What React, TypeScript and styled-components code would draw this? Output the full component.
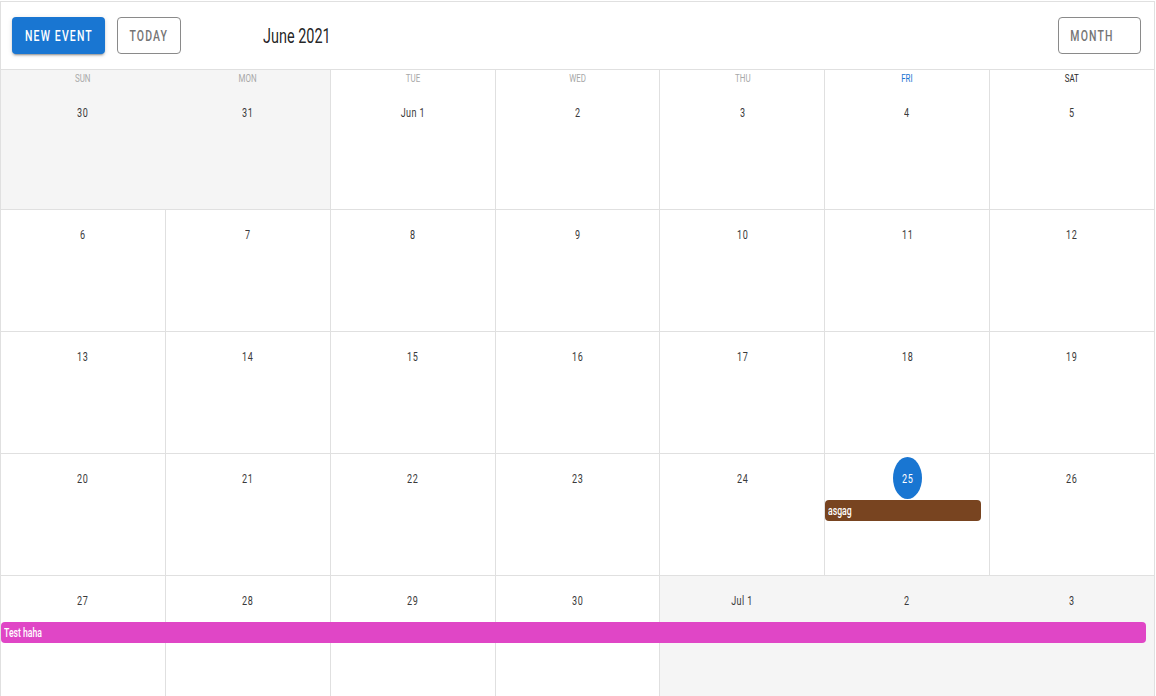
import React from 'react';
import styled, { createGlobalStyle, css } from 'styled-components';

const SX = 0.7225;
const SY = 1.04;

const Global = createGlobalStyle`
  html, body { margin: 0; padding: 0; background: #fff; }
  body { font-family: Roboto, "Noto Sans", Arial, sans-serif; overflow: hidden; }
  * { box-sizing: border-box; }
`;

const Squash = styled.span<{ $origin?: string }>`
  display: inline-block;
  white-space: nowrap;
  transform: scale(${SX}, ${SY});
  transform-origin: ${(p) => p.$origin ?? 'center center'};
`;

const Frame = styled.div`
  width: 1155px;
  margin-top: 1px;
  border-top: 1px solid #e0e0e0;
  border-left: 1px solid #e0e0e0;
`;

const Toolbar = styled.div`
  height: 68px;
  display: flex;
  align-items: center;
  padding: 0 13px 0 11px;
  border-bottom: 1px solid #e0e0e0;
  border-right: 1px solid #e0e0e0;
`;

const Button = styled.button<{ $variant: 'primary' | 'outlined'; $w: number; $padRight?: number }>`
  height: 37px;
  width: ${(p) => p.$w}px;
  flex: none;
  display: flex;
  align-items: center;
  justify-content: center;
  margin: 0;
  padding: 1px ${(p) => p.$padRight ?? 0}px 0 0;
  border-radius: 4px;
  font-family: Roboto, Arial, sans-serif;
  font-size: 14.5px;
  font-weight: 500;
  letter-spacing: 1.6px;
  text-transform: uppercase;
  overflow: visible;
  cursor: pointer;
  ${(p) =>
    p.$variant === 'primary'
      ? css`
          background: #1976d2;
          color: #fff;
          border: none;
          box-shadow: 0 3px 1px -2px rgba(0, 0, 0, 0.2), 0 2px 2px 0 rgba(0, 0, 0, 0.14),
            0 1px 5px 0 rgba(0, 0, 0, 0.12);
        `
      : css`
          background: #fff;
          color: #757575;
          border: 1px solid #8a8a8a;
        `}
`;

const Gap = styled.div<{ $w: number }>`
  width: ${(p) => p.$w}px;
  flex: none;
`;

const Title = styled.div`
  font-size: 20px;
  font-weight: 400;
  color: rgba(0, 0, 0, 0.87);
  line-height: 28px;
  width: 120px;
  flex: none;
`;

const Spacer = styled.div`
  flex: 1;
`;

const HeadRow = styled.div`
  display: grid;
  grid-template-columns: repeat(7, minmax(0, 1fr));
  height: 18px;
`;

const HeadCell = styled.div<{ $outside: boolean; $line: boolean; $color: string }>`
  text-align: center;
  font-size: 11px;
  line-height: 17px;
  color: ${(p) => p.$color};
  background: ${(p) => (p.$outside ? '#f5f5f5' : '#fff')};
  border-right: 1px solid ${(p) => (p.$line ? '#e0e0e0' : 'transparent')};
  text-transform: uppercase;
`;

const Week = styled.div`
  display: grid;
  grid-template-columns: repeat(7, minmax(0, 1fr));
  grid-template-rows: 46px 21px 1fr;
  height: 122px;
  border-bottom: 1px solid #e0e0e0;
`;

const DayCell = styled.div<{ $col: number; $outside: boolean; $line: boolean }>`
  grid-column: ${(p) => p.$col};
  grid-row: 1 / -1;
  display: flex;
  flex-direction: column;
  align-items: center;
  background: ${(p) => (p.$outside ? '#f5f5f5' : '#fff')};
  border-right: 1px solid ${(p) => (p.$line ? '#e0e0e0' : 'transparent')};
`;

const DayLabel = styled.div<{ $today: boolean }>`
  margin-top: 3px;
  width: 29px;
  height: 42px;
  display: flex;
  align-items: center;
  justify-content: center;
  font-size: 12.5px;
  font-weight: 400;
  letter-spacing: 0.6px;
  border-radius: 50%;
  color: ${(p) => (p.$today ? '#fff' : '#3a3a3a')};
  background: ${(p) => (p.$today ? '#1976d2' : 'transparent')};
`;

const EventBar = styled.div<{ $col: number; $span: number; $color: string }>`
  grid-column: ${(p) => `${p.$col} / span ${p.$span}`};
  grid-row: 2;
  z-index: 1;
  margin-right: 9px;
  min-width: 0;
  display: flex;
  align-items: center;
  padding-left: 3px;
  border-radius: 4px;
  background: ${(p) => p.$color};
  color: #fff;
  font-size: 12px;
  font-weight: 500;
  overflow: hidden;
`;

type Day = { label: string; outside?: boolean; today?: boolean };
type Ev = { name: string; col: number; span: number; color: string };

const weekdays = [
  { name: 'Sun', color: '#a8a8a8' },
  { name: 'Mon', color: '#a8a8a8' },
  { name: 'Tue', color: '#a8a8a8' },
  { name: 'Wed', color: '#a8a8a8' },
  { name: 'Thu', color: '#a8a8a8' },
  { name: 'Fri', color: '#1976d2' },
  { name: 'Sat', color: '#2a2a2a' },
];

const range = (a: number, b: number): Day[] =>
  Array.from({ length: b - a + 1 }, (_, i) => ({ label: String(a + i) }));

const weeks: { days: Day[]; events: Ev[] }[] = [
  {
    days: [
      { label: '30', outside: true },
      { label: '31', outside: true },
      { label: 'Jun 1' },
      ...range(2, 5),
    ],
    events: [],
  },
  { days: range(6, 12), events: [] },
  { days: range(13, 19), events: [] },
  {
    days: range(20, 26).map((d) => (d.label === '25' ? { ...d, today: true } : d)),
    events: [{ name: 'asgag', col: 6, span: 1, color: '#784420' }],
  },
  {
    days: [
      ...range(27, 30),
      { label: 'Jul 1', outside: true },
      { label: '2', outside: true },
      { label: '3', outside: true },
    ],
    events: [{ name: 'Test haha', col: 1, span: 7, color: '#e046c6' }],
  },
];

const lineAfter = (days: Day[], i: number) => {
  if (i === days.length - 1) return true;
  return !(days[i].outside && days[i + 1].outside);
};

export default function App() {
  const first = weeks[0].days;
  return (
    <>
      <Global />
      <Frame>
        <Toolbar>
          <Button $variant="primary" $w={93}>
            <Squash>New Event</Squash>
          </Button>
          <Gap $w={12} />
          <Button $variant="outlined" $w={64}>
            <Squash>Today</Squash>
          </Button>
          <Gap $w={82} />
          <Title>
            <Squash $origin="left center">June 2021</Squash>
          </Title>
          <Spacer />
          <Button $variant="outlined" $w={83} $padRight={15}>
            <Squash>Month</Squash>
          </Button>
        </Toolbar>
        <HeadRow>
          {weekdays.map((w, i) => (
            <HeadCell key={w.name} $outside={!!first[i].outside} $line={lineAfter(first, i)} $color={w.color}>
              <Squash>{w.name}</Squash>
            </HeadCell>
          ))}
        </HeadRow>
        {weeks.map((wk, wi) => (
          <Week key={wi}>
            {wk.days.map((d, i) => (
              <DayCell key={i} $col={i + 1} $outside={!!d.outside} $line={lineAfter(wk.days, i)}>
                <DayLabel $today={!!d.today}>
                  <Squash>{d.label}</Squash>
                </DayLabel>
              </DayCell>
            ))}
            {wk.events.map((e) => (
              <EventBar key={e.name} $col={e.col} $span={e.span} $color={e.color}>
                <Squash $origin="left center">{e.name}</Squash>
              </EventBar>
            ))}
          </Week>
        ))}
      </Frame>
    </>
  );
}
